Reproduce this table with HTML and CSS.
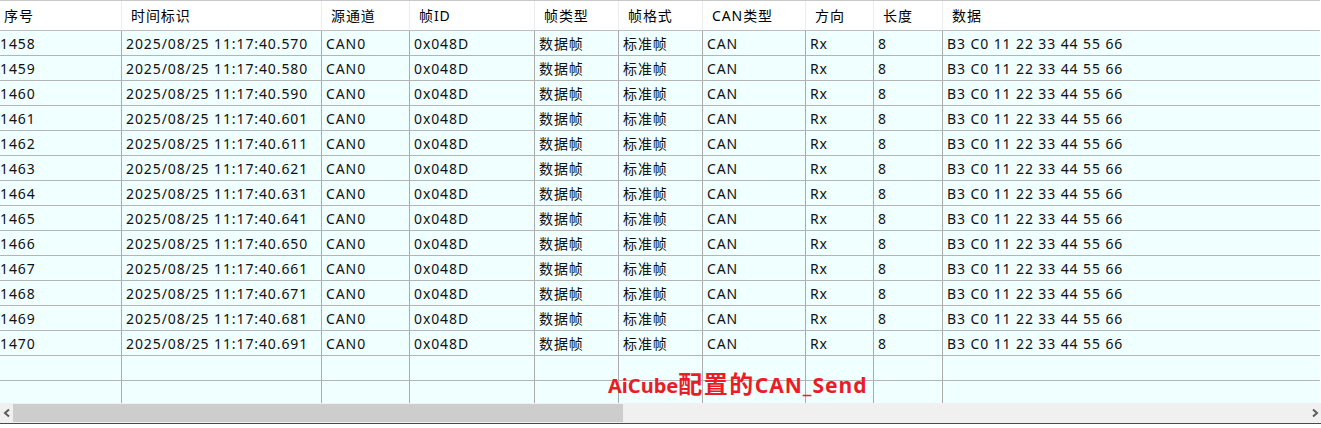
FILE: index.html
```html
<!DOCTYPE html>
<html lang="zh">
<head>
<meta charset="utf-8">
<title>CAN</title>
<link rel="stylesheet" href="styles.css">
</head>
<body>
<div class="app">
  <div class="viewport">
    <div class="row head">
      <div class="c c1">序号</div><div class="c">时间标识</div><div class="c">源通道</div><div class="c">帧ID</div><div class="c">帧类型</div><div class="c">帧格式</div><div class="c">CAN类型</div><div class="c">方向</div><div class="c">长度</div><div class="c last">数据</div>
    </div>
    <div id="rows"></div>
    <div class="row data empty"><div class="c c1"></div><div class="c"></div><div class="c"></div><div class="c"></div><div class="c"></div><div class="c"></div><div class="c"></div><div class="c"></div><div class="c"></div><div class="c last"></div></div>
    <div class="row data empty"><div class="c c1"></div><div class="c"></div><div class="c"></div><div class="c"></div><div class="c"></div><div class="c"></div><div class="c"></div><div class="c"></div><div class="c"></div><div class="c last"></div></div>
    <div class="note">AiCube<span class="cjk">配置的</span><span class="tail">CAN_Send</span></div>
  </div>
  <div class="hscroll">
    <div class="arrow"><svg width="10" height="10" viewBox="0 0 10 10"><polyline points="7,1.5 3,5 7,8.5" fill="none" stroke="#5c5c5c" stroke-width="2"/></svg></div>
    <div class="track"><div class="thumb"></div></div>
    <div class="arrow"><svg width="10" height="10" viewBox="0 0 10 10"><polyline points="3,1.5 7,5 3,8.5" fill="none" stroke="#5c5c5c" stroke-width="2"/></svg></div>
  </div>
  <div class="bottomline"></div>
</div>
<script>
  var times=["570","580","590","601","611","621","631","641","650","661","671","681","691"];
  var html="";
  for(var i=0;i<13;i++){
    html+='<div class="row data"><div class="c c1">'+(1458+i)+'</div><div class="c">2025/08/25 11:17:40.'+times[i]+'</div><div class="c">CAN0</div><div class="c">0x048D</div><div class="c">数据帧</div><div class="c">标准帧</div><div class="c">CAN</div><div class="c">Rx</div><div class="c">8</div><div class="c last">B3 C0 11 22 33 44 55 66</div></div>';
  }
  document.getElementById("rows").innerHTML=html;
</script>
</body>
</html>
```
FILE: styles.css
```css
html, body {
  margin: 0;
  padding: 0;
  background: #ffffff;
}
body {
  font-family: "Noto Sans", "Noto Sans CJK SC", sans-serif;
  font-size: 14px;
  letter-spacing: 0.9px;
  color: #111;
}
.app {
  width: 1321px;
  height: 428px;
  display: flex;
  flex-direction: column;
}
.viewport {
  position: relative;
  width: 1320px;
  height: 403px;
  overflow: hidden;
  border-top: 1px solid #c8c8c8;
  box-sizing: border-box;
  background: #ffffff;
}
.row {
  display: grid;
  grid-template-columns: 122px 200px 88px 125px 84px 84px 103px 68px 69px 1fr;
}
.c {
  box-sizing: border-box;
  white-space: nowrap;
  overflow: hidden;
  display: flex;
  align-items: center;
}
.head {
  height: 29px;
  border-bottom: 1px solid #bdbdbd;
  background: #fff;
}
.head .c {
  border-right: 1px solid #ececec;
  padding-left: 9px;
  padding-bottom: 1px;
  color: #000;
}
.head .c1 { padding-left: 4px; }
.data {
  height: 25px;
  background: #f0ffff;
}
.data .c {
  border-right: 1px solid #ababab;
  border-bottom: 1px solid #b4b4b4;
  padding-left: 4px;
}
.data .c1 { padding-left: 0; }
.c.last { border-right: none; }
.data .last { border-right: none; }
.note {
  position: absolute;
  left: 608px;
  top: 369px;
  font-size: 20px;
  font-weight: 700;
  letter-spacing: 0;
  color: #ec1c24;
  line-height: 28px;
  white-space: nowrap;
}
.note .cjk {
  font-size: 24px;
  letter-spacing: 1.5px;
}
.note .tail {
  font-size: 21px;
  letter-spacing: 1px;
}
.hscroll {
  height: 20px;
  display: flex;
  background: #f0f0f0;
  align-items: center;
}
.arrow {
  width: 13px;
  height: 20px;
  display: flex;
  align-items: center;
  justify-content: center;
}
.track {
  flex: 1;
  height: 18px;
}
.thumb {
  width: 610px;
  height: 18px;
  background: #cdcdcd;
}
.bottomline {
  height: 1px;
  background: #4a4a4a;
}
```
